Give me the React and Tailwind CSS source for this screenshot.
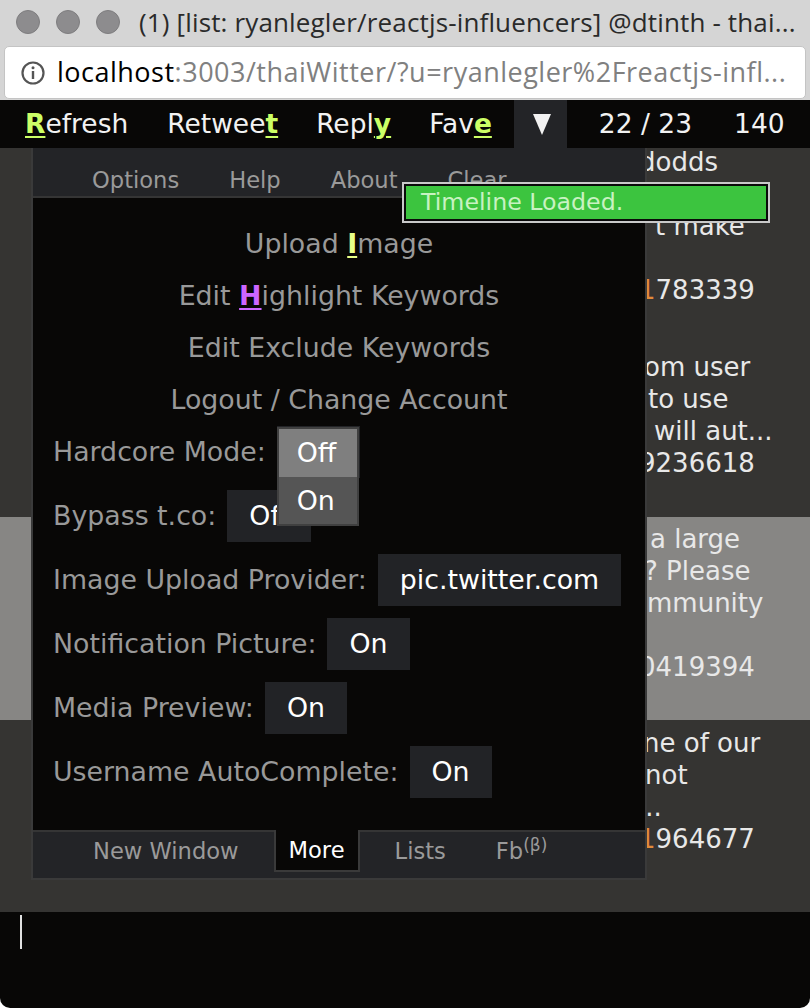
import React from 'react';

const feed = [
  {
    box: '-mt-[2px]',
    lines: [
      ['pl-[639px]', 'dodds'],
      ['', ''],
      ['pl-[655px]', 't make'],
      ['', ''],
      ['pl-[639px]', '1783339', true],
    ],
  },
  {
    box: 'pt-[13px] pb-[38px]',
    lines: [
      ['', ''],
      ['pl-[644px]', 'om user'],
      ['pl-[648px]', 'to use'],
      ['pl-[654px]', 'will aut...'],
      ['pl-[639px]', '9236618'],
    ],
  },
  {
    box: 'pt-[6px] pb-[37px] bg-[#878684]',
    lines: [
      ['pl-[650px]', 'a large'],
      ['pl-[644px]', '? Please'],
      ['pl-[647px]', 'mmunity'],
      ['', ''],
      ['pl-[639px]', '0419394'],
    ],
  },
  {
    box: 'pt-[7px]',
    lines: [
      ['pl-[643px]', 'ne of our'],
      ['pl-[645px]', 'not'],
      ['pl-[637px]', '...'],
      ['pl-[639px]', '1964677', true],
    ],
  },
];

const settings = [
  ['Bypass t.co:', 'Off'],
  ['Image Upload Provider:', 'pic.twitter.com'],
  ['Notification Picture:', 'On'],
  ['Media Preview:', 'On'],
  ['Username AutoComplete:', 'On'],
];

function Key({ children }) {
  return (
    <span className="font-bold text-[#ccff66] underline decoration-2 underline-offset-[3px]">
      {children}
    </span>
  );
}

function SettingButton({ children }) {
  return (
    <div className="ml-[11px] h-[52px] px-[22px] bg-[#222326] text-white leading-[52px] whitespace-nowrap">
      {children}
    </div>
  );
}

export default function App() {
  return (
    <div className="relative w-[810px] h-[1008px] flex flex-col overflow-hidden rounded-b-[10px] font-['DejaVu_Sans',sans-serif]">
      {/* window title */}
      <div className="h-[44px] shrink-0 bg-[#d5d5d5] flex items-center pl-[16px]">
        <div className="flex gap-[16px]">
          <div className="w-[24px] h-[24px] rounded-full bg-[#8d8c8e] border border-[#7e7d7f]" />
          <div className="w-[24px] h-[24px] rounded-full bg-[#8d8c8e] border border-[#7e7d7f]" />
          <div className="w-[24px] h-[24px] rounded-full bg-[#8d8c8e] border border-[#7e7d7f]" />
        </div>
        <div className="ml-[19px] whitespace-nowrap text-[26px] tracking-[0.15px] text-[#2a2a2a] font-['Open_Sans',sans-serif]">
          (1) [list: ryanlegler/reactjs-influencers] @dtinth - thai...
        </div>
      </div>

      {/* address bar */}
      <div className="h-[56px] shrink-0 bg-[#d5d5d5] px-[4px] pt-[2px] pb-[1px]">
        <div className="h-full rounded-[5px] bg-white border border-[#c4c4c4] flex items-center pl-[16px]">
          <svg width="24" height="24" viewBox="0 0 24 24">
            <circle cx="12" cy="12" r="10.5" fill="none" stroke="#555" strokeWidth="2.2" />
            <rect x="10.8" y="10" width="2.4" height="8" fill="#555" />
            <circle cx="12" cy="6.8" r="1.5" fill="#555" />
          </svg>
          <div className="ml-[12px] whitespace-nowrap text-[27px] tracking-[0.5px] font-['Open_Sans',sans-serif]">
            <span className="text-black">localhost</span>
            <span className="text-[#808080]">:3003/thaiWitter/?u=ryanlegler%2Freactjs-infl...</span>
          </div>
        </div>
      </div>

      {/* action bar */}
      <div className="h-[48px] shrink-0 bg-[#080706] flex items-center pl-[25px] text-[26.5px] text-[#f2f2f2] whitespace-nowrap">
        <div>
          <Key>R</Key>efresh
        </div>
        <div className="ml-[39px]">
          Retwee<Key>t</Key>
        </div>
        <div className="ml-[38px]">
          Repl<Key>y</Key>
        </div>
        <div className="ml-[38px]">
          Fav<Key>e</Key>
        </div>
        <div className="ml-[22px] self-stretch w-[53px] bg-[#232427] flex items-center justify-center">
          <svg width="18" height="21" viewBox="0 0 18 21" className="ml-[4px]">
            <polygon points="0,0 18,0 9,21" fill="#f2f2f2" />
          </svg>
        </div>
        <div className="ml-[32px]">22 / 23</div>
        <div className="ml-[42px]">140</div>
      </div>

      {/* timeline + options panel */}
      <div className="relative h-[764px] shrink-0 bg-[#353432] overflow-hidden text-[26px] text-[#e8e8e8]">
        {feed.map((tweet, i) => (
          <div key={i} className={tweet.box}>
            {tweet.lines.map(([pl, text, link], j) => (
              <div key={j} className={`h-[32px] leading-[32px] whitespace-nowrap ${pl}`}>
                {link ? (
                  <>
                    <span className="text-[#e08a3a]">{text[0]}</span>
                    {text.slice(1)}
                  </>
                ) : (
                  text
                )}
              </div>
            ))}
          </div>
        ))}

        <div className="absolute left-[31px] top-0 w-[616px] h-[732px] flex flex-col bg-[#080706] border-x-2 border-b-2 border-[#3a3a3a]">
          <div className="h-[50px] shrink-0 bg-[#232427] border-b-2 border-[#353535] flex pl-[34px] pt-[19px] text-[22.6px] leading-[26px] text-[#9a9a9a]">
            <div className="px-[25px]">Options</div>
            <div className="px-[25px]">Help</div>
            <div className="px-[25px]">About</div>
            <div className="px-[25px]">Clear</div>
          </div>

          <div className="flex-1 pt-[20px] flex flex-col text-[26.8px] text-[#999999]">
            <div className="text-center leading-[52px]">
              Upload{' '}
              <span className="font-bold text-[#e8ff88] underline decoration-2 underline-offset-[3px]">
                I
              </span>
              mage
            </div>
            <div className="text-center leading-[52px]">
              Edit{' '}
              <span className="font-bold text-[#cc66ff] underline decoration-2 underline-offset-[3px]">
                H
              </span>
              ighlight Keywords
            </div>
            <div className="text-center leading-[52px]">Edit Exclude Keywords</div>
            <div className="text-center leading-[52px]">Logout / Change Account</div>

            <div className="flex flex-col gap-[12px] pl-[20px]">
              <div className="flex items-center h-[52px]">
                <div className="whitespace-nowrap">Hardcore Mode:</div>
                <div className="relative">
                  <SettingButton>Off</SettingButton>
                  <div className="absolute left-[11px] top-[1px] w-[82px] border-2 border-[#404040] text-white">
                    <div className="h-[48px] leading-[48px] pl-[18px] bg-[#7f7f7f]">Off</div>
                    <div className="h-[47px] leading-[47px] pl-[18px] bg-[#555555]">On</div>
                  </div>
                </div>
              </div>
              {settings.map(([label, value]) => (
                <div key={label} className="flex items-center h-[52px]">
                  <div className="whitespace-nowrap">{label}</div>
                  <SettingButton>{value}</SettingButton>
                </div>
              ))}
            </div>
          </div>

          <div className="h-[48px] shrink-0 bg-[#232427] border-t-2 border-[#353535] flex pl-[35px] text-[22.6px] leading-[38px] text-[#9a9a9a]">
            <div className="px-[25px]">New Window</div>
            <div className="-mt-[2px] mx-[10px] h-[42px] px-[13px] bg-[#080706] border-x-2 border-b-2 border-[#3a3a3a] text-white leading-[40px]">
              More
            </div>
            <div className="px-[25px]">Lists</div>
            <div className="px-[25px]">
              Fb<sup className="text-[17px]">(β)</sup>
            </div>
          </div>
        </div>
      </div>

      {/* compose box */}
      <div className="flex-1 bg-[#080706] pt-[3px]">
        <div className="ml-[20px] w-[2px] h-[34px] bg-[#e0e0e0]" />
      </div>

      {/* toast */}
      <div className="absolute left-[402px] top-[182px] w-[368px] h-[41px] border-2 border-[#c9c9c9] p-[2px] bg-[#0a0a0a]">
        <div className="h-full bg-[#3cc43f] pl-[15px] text-[23.7px] leading-[33px] text-[#c8f2c2] whitespace-nowrap">
          Timeline Loaded.
        </div>
      </div>
    </div>
  );
}
